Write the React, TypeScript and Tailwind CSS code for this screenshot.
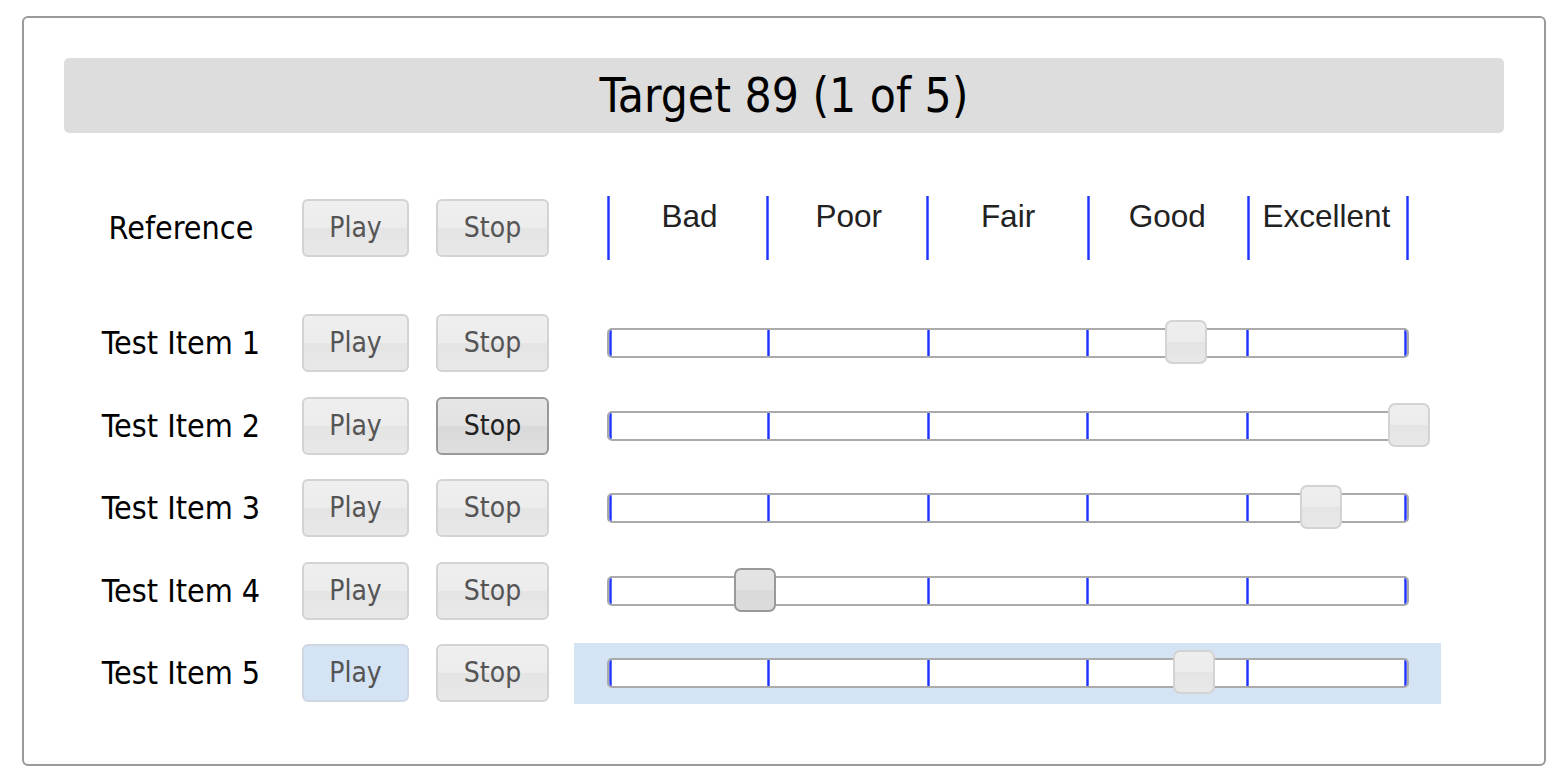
import React from 'react';

const UI_FONT = { fontFamily: '"DejaVu Sans Condensed", "DejaVu Sans", sans-serif' };
const SCALE_FONT = { fontFamily: '"Liberation Sans", Arial, sans-serif' };

const GRADES = ['Bad', 'Poor', 'Fair', 'Good', 'Excellent'];

const ITEMS = [
  { name: 'Test Item 1', value: 72 },
  { name: 'Test Item 2', value: 100, stopActive: true },
  { name: 'Test Item 3', value: 89 },
  { name: 'Test Item 4', value: 18, handleActive: true },
  { name: 'Test Item 5', value: 73, selected: true },
];

function Btn({ label, w, active, blue }: { label: string; w: string; active?: boolean; blue?: boolean }) {
  let look = 'border-[#d3d3d3] text-[#555] bg-[linear-gradient(#efefef_0%,#ececec_50%,#e4e4e4_51%,#e8e8e8_100%)]';
  if (active) look = 'border-[#999] text-[#212121] bg-[linear-gradient(#e6e6e6_0%,#e2e2e2_50%,#d9d9d9_51%,#dedede_100%)]';
  if (blue) look = 'border-[#cfd8e2] text-[#555] bg-[#d4e4f4]';
  return (
    <button
      className={`${w} h-[58px] shrink-0 rounded-[6px] border-2 text-[28px] leading-none ${look}`}
      style={UI_FONT}
    >
      {label}
    </button>
  );
}

function Ticks() {
  return (
    <>
      {[0, 1, 2, 3, 4, 5].map((i) => (
        <div
          key={i}
          className="absolute top-0 bottom-0 w-[3px] bg-[linear-gradient(90deg,#8a96ff,#1f33ff_40%,#1f33ff_60%,#8a96ff)]"
          style={
            i === 0
              ? { left: 0 }
              : i === 5
              ? { right: 0 }
              : { left: `calc(${i * 20}% - 1.5px)` }
          }
        />
      ))}
    </>
  );
}

function Slider({ value, active }: { value: number; active?: boolean }) {
  return (
    <div className="relative w-[802px] h-[30px] rounded-[5px] border-2 border-[#aaa] bg-white">
      <div className="absolute inset-0 overflow-hidden rounded-[3px]">
        <Ticks />
      </div>
      <div
        className={`absolute top-[-10px] w-[42px] h-[44px] ml-[-19px] rounded-[7px] border-2 ${
          active
            ? 'border-[#999] bg-[linear-gradient(#e4e4e4_0%,#e2e2e2_50%,#d9d9d9_51%,#dcdcdc_100%)]'
            : 'border-[#d3d3d3] bg-[linear-gradient(#eeeeee_0%,#ececec_50%,#e4e4e4_51%,#e8e8e8_100%)]'
        }`}
        style={{ left: `${value}%` }}
      />
    </div>
  );
}

export default function App() {
  return (
    <div className="bg-white min-h-[784px] pt-[16px] pl-[22px]">
      <div className="w-[1524px] h-[750px] rounded-[6px] border-2 border-[#9a9a9a] px-[40px] pt-[40px]">
        {/* title */}
        <div
          className="h-[75px] rounded-[5px] bg-[#dddddd] flex items-center justify-center text-[47.5px] text-black"
          style={UI_FONT}
        >
          Target 89 (1 of 5)
        </div>

        {/* reference row */}
        <div className="flex items-center h-[64px] mt-[63px]">
          <div className="w-[234px] mr-[4px] text-center text-[32px] text-black" style={UI_FONT}>
            Reference
          </div>
          <Btn label="Play" w="w-[107px]" />
          <div className="w-[27px]" />
          <Btn label="Stop" w="w-[113px]" />
          <div className="ml-[58px] relative w-[802px] h-[64px]">
            <Ticks />
            <div className="absolute inset-0 flex px-[3px]">
              {GRADES.map((g) => (
                <div key={g} className="flex-1 text-center text-[31.5px] text-[#222] leading-[34px] pt-[3px]" style={SCALE_FONT}>
                  {g}
                </div>
              ))}
            </div>
          </div>
        </div>

        {/* test items */}
        <div className="flex flex-col gap-[21.5px] mt-[52.5px]">
          {ITEMS.map((it) => (
            <div key={it.name} className="flex items-center h-[61px]">
              <div className="w-[234px] mr-[4px] text-center text-[32px] text-black" style={UI_FONT}>
                {it.name}
              </div>
              <Btn label="Play" w="w-[107px]" blue={it.selected} />
              <div className="w-[27px]" />
              <Btn label="Stop" w="w-[113px]" active={it.stopActive} />
              <div
                className={`ml-[25px] w-[867px] h-[61px] pl-[33px] flex items-center ${
                  it.selected ? 'bg-[#d4e4f4]' : ''
                }`}
              >
                <Slider value={it.value} active={it.handleActive} />
              </div>
            </div>
          ))}
        </div>
      </div>
    </div>
  );
}
